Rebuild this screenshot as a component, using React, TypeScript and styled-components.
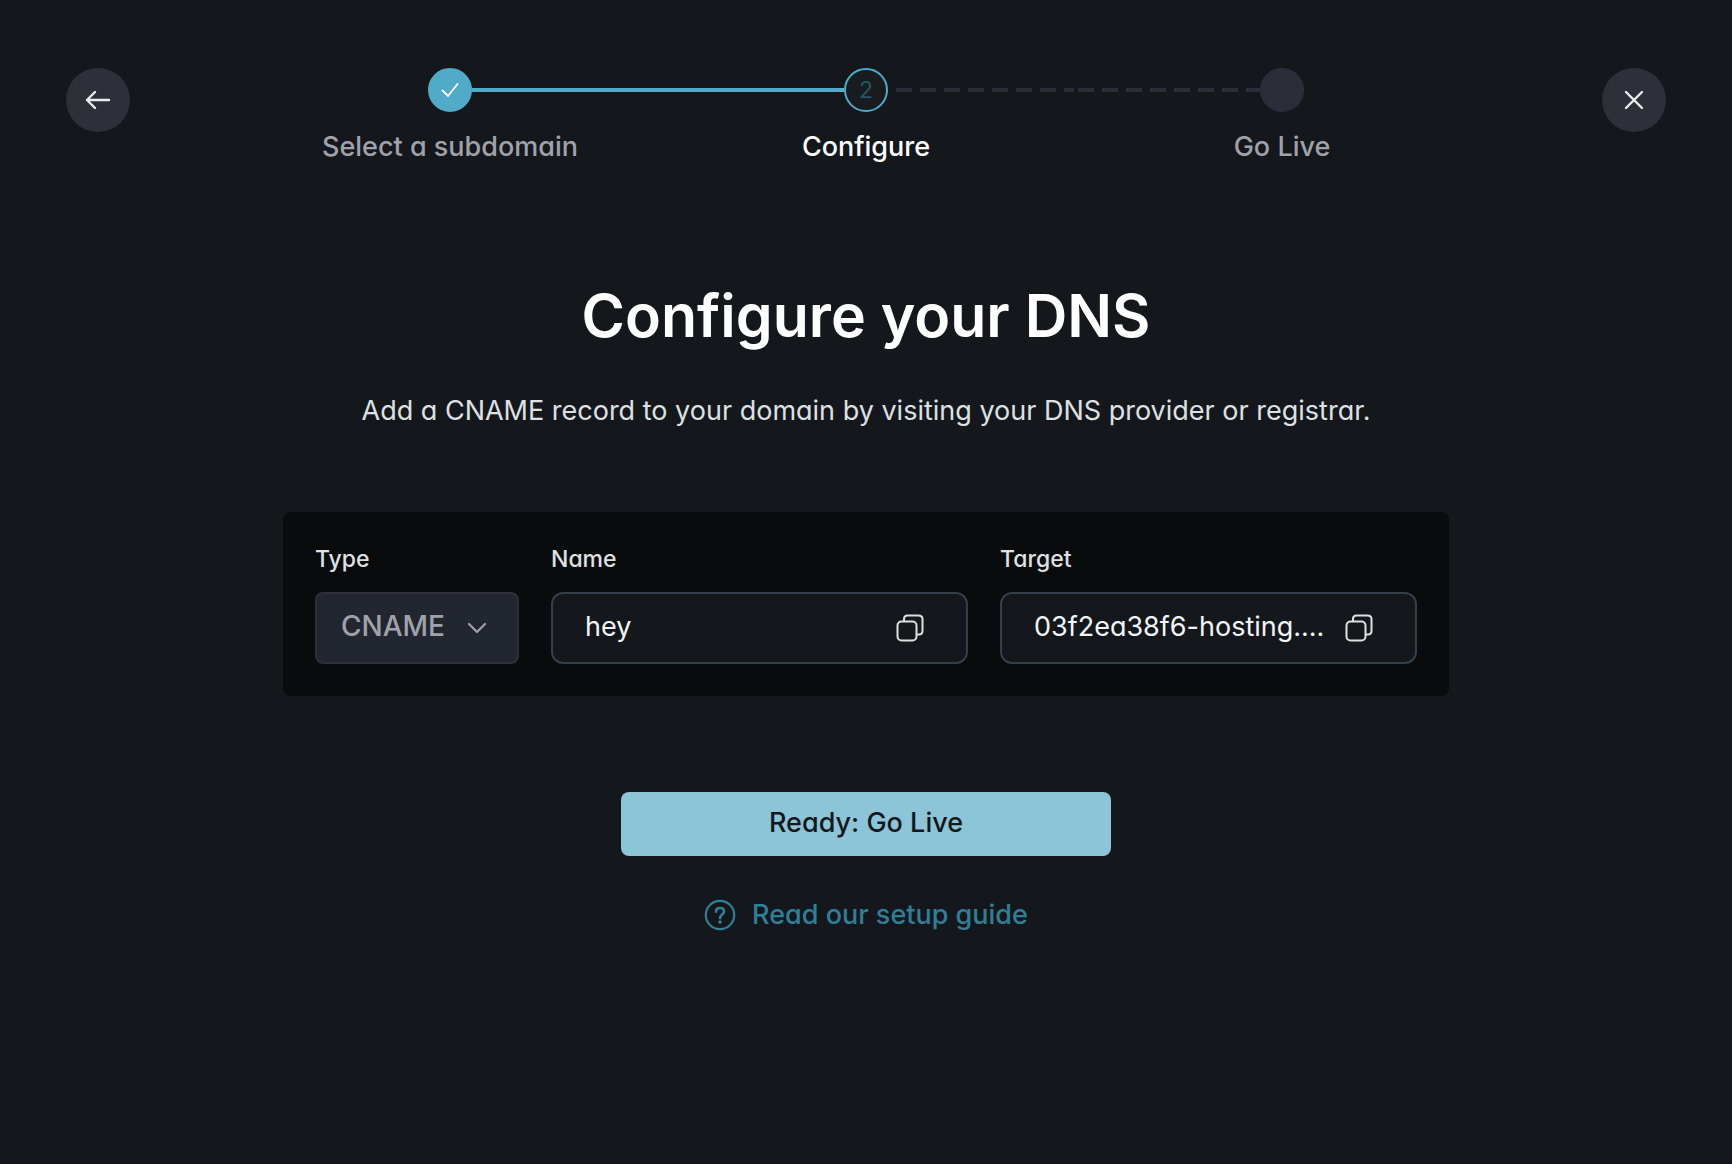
import React from "react";
import styled, { createGlobalStyle } from "styled-components";

const GlobalStyle = createGlobalStyle`
  *, *::before, *::after { box-sizing: border-box; }
  html, body, #root { height: 100%; }
  body {
    margin: 0;
    background: #14181c;
    color: #ffffff;
    font-family: Inter, "Noto Sans", sans-serif;
    font-size: 27px;
    font-feature-settings: "cv11";
    -webkit-font-smoothing: antialiased;
  }
  button, input, select {
    font: inherit;
    font-feature-settings: inherit;
    color: inherit;
    margin: 0;
  }
`;

const Page = styled.div`
  min-height: 100%;
  display: flex;
  flex-direction: column;
  border-bottom: 2px solid #12131a;
`;

const Header = styled.header`
  display: flex;
  justify-content: space-between;
  align-items: flex-start;
  padding: 68px 66px 0;
`;

const RoundButton = styled.button`
  flex: none;
  display: grid;
  place-items: center;
  width: 64px;
  height: 64px;
  padding: 0;
  border: 0;
  border-radius: 50%;
  background: #2d3039;
  color: #ebecee;
  cursor: pointer;
`;

const Steps = styled.ol`
  flex: 0 1 1248px;
  display: grid;
  grid-template-columns: repeat(3, 1fr);
  margin: 0;
  padding: 0;
  list-style: none;
`;

const Step = styled.li<{ $current?: boolean }>`
  display: flex;
  flex-direction: column;
  align-items: center;
  gap: 16px;
  font-weight: 500;
  line-height: 38px;
  color: ${(p) => (p.$current ? "#ffffff" : "#a0a2ab")};
`;

const Track = styled.div`
  align-self: stretch;
  display: flex;
  align-items: center;
`;

type LineKind = "none" | "solid" | "dashed";

const lineFill = {
  none: "none",
  solid: "linear-gradient(#50abc9, #50abc9)",
  dashed: "repeating-linear-gradient(90deg, transparent 0 8px, #2c2d39 8px 24px)",
};

const Line = styled.span<{ $kind: LineKind; $shift?: number }>`
  flex: 1;
  height: 4px;
  background-image: ${(p) => lineFill[p.$kind]};
  background-size: ${(p) => (p.$kind === "dashed" ? "24px 4px" : "auto")};
  background-position: ${(p) => p.$shift ?? 0}px 0;
`;

const Marker = styled.span<{ $state: "done" | "current" | "todo" }>`
  flex: none;
  display: grid;
  place-items: center;
  width: 44px;
  height: 44px;
  border-radius: 50%;
  border: 2px solid ${(p) => (p.$state === "todo" ? "#2c2d39" : "#50abc9")};
  background: ${(p) => ({ done: "#50abc9", current: "#181c1e", todo: "#2c2d39" })[p.$state]};
  color: ${(p) => (p.$state === "done" ? "#ffffff" : "#265464")};
  font-size: 23px;
  font-weight: 400;
  line-height: 38px;
`;

const Main = styled.main`
  display: flex;
  flex-direction: column;
  align-items: center;
  padding: 110px 48px 64px;
`;

const Title = styled.h1`
  margin: 0;
  font-size: 59px;
  font-weight: 600;
  line-height: 80px;
  text-align: center;
`;

const Intro = styled.p`
  margin: 36px 0 0;
  line-height: 38px;
  color: #dfe0e3;
  text-align: center;
`;

const Record = styled.form`
  display: grid;
  grid-template-columns: 204px 1fr 1fr;
  gap: 32px;
  width: 100%;
  max-width: 1166px;
  margin-top: 82px;
  padding: 32px;
  border-radius: 8px;
  background: #0a0b0c;
`;

const Field = styled.div`
  min-width: 0;
  display: flex;
  flex-direction: column;
  gap: 18px;
`;

const FieldLabel = styled.label`
  font-size: 23px;
  font-weight: 500;
  line-height: 30px;
  color: #dfe0e3;
`;

const SelectBox = styled.div`
  display: grid;
  align-items: center;
  height: 72px;
  color: #a0a2ab;

  & > * { grid-area: 1 / 1; }
  & > svg { justify-self: end; margin-right: 32px; pointer-events: none; }
`;

const Select = styled.select`
  appearance: none;
  width: 100%;
  height: 100%;
  padding: 0 64px 4px 24px;
  border: 2px solid #2d3039;
  border-radius: 8px;
  background: #22262e;
  font-size: 28px;
  font-weight: 500;
  opacity: 1;
`;

const CopyBox = styled.div`
  display: flex;
  align-items: center;
  height: 72px;
  padding: 0 42px 0 32px;
  border: 2px solid #353e4c;
  border-radius: 12px;
  background: #14181c;
`;

const CopyInput = styled.input`
  flex: 1;
  min-width: 0;
  height: 100%;
  padding: 0 0 4px;
  border: 0;
  outline: 0;
  background: transparent;
  color: #f1f5f8;
  text-overflow: ellipsis;
`;

const CopyButton = styled.button`
  flex: none;
  display: grid;
  place-items: center;
  padding: 0;
  border: 0;
  background: none;
  color: #dfe0e3;
  cursor: pointer;
`;

const Primary = styled.button`
  width: 100%;
  max-width: 490px;
  height: 64px;
  margin-top: 96px;
  padding: 0 0 4px;
  border: 0;
  border-radius: 8px;
  background: #8cc5d8;
  color: #14181c;
  font-weight: 500;
  cursor: pointer;
`;

const Guide = styled.a`
  display: flex;
  align-items: center;
  gap: 16px;
  margin-top: 40px;
  font-weight: 500;
  line-height: 38px;
  color: #307f98;
  text-decoration: none;
`;

const ArrowLeft = () => (
  <svg width="28" height="24" viewBox="0 0 28 24" fill="none" stroke="currentColor" strokeWidth="2.4" strokeLinecap="round" strokeLinejoin="round">
    <path d="M25 12H3M11 4L3 12L11 20" />
  </svg>
);

const Cross = () => (
  <svg width="24" height="24" viewBox="0 0 24 24" fill="none" stroke="currentColor" strokeWidth="2.4" strokeLinecap="round">
    <path d="M4 4L20 20M20 4L4 20" />
  </svg>
);

const Tick = () => (
  <svg width="20" height="20" viewBox="0 0 20 20" fill="none" stroke="currentColor" strokeWidth="1.8">
    <path d="M2 10L8 16L18 3.5" />
  </svg>
);

const Chevron = () => (
  <svg width="20" height="12" viewBox="0 0 20 12" fill="none" stroke="currentColor" strokeWidth="2.2" strokeLinecap="round" strokeLinejoin="round">
    <path d="M2 2L10 10L18 2" />
  </svg>
);

const CopyIcon = () => (
  <svg width="28" height="28" viewBox="0 0 28 28" fill="none" stroke="currentColor" strokeWidth="2">
    <rect x="1.5" y="7.5" width="19" height="19" rx="4" />
    <path d="M8 7.5V5C8 3 9.500 1.500 11.500 1.500H22.500C25 1.500 26.500 3 26.500 5V16.500C26.500 19 25 20.500 23 20.500H20.500" />
  </svg>
);

const HelpIcon = () => (
  <svg width="32" height="32" viewBox="0 0 32 32" fill="none" stroke="currentColor" strokeWidth="2.2">
    <circle cx="16" cy="16" r="14.2" />
    <path d="M12 12.800C12 10.300 13.500 9 16 9C18.500 9 20 10.500 20 12.600C20 15.500 16 15.500 16 19.300" strokeWidth="2.6" strokeLinecap="round" />
    <circle cx="16" cy="23" r="1.8" fill="currentColor" stroke="none" />
  </svg>
);

type CopyFieldProps = { id: string; label: string; value: string };

const CopyField = ({ id, label, value }: CopyFieldProps) => (
  <Field>
    <FieldLabel htmlFor={id}>{label}</FieldLabel>
    <CopyBox>
      <CopyInput id={id} readOnly value={value} />
      <CopyButton type="button" aria-label={`Copy ${label}`}>
        <CopyIcon />
      </CopyButton>
    </CopyBox>
  </Field>
);

export default function App() {
  return (
    <>
      <GlobalStyle />
      <Page>
        <Header>
          <RoundButton type="button" aria-label="Back">
            <ArrowLeft />
          </RoundButton>
          <Steps>
            <Step>
              <Track>
                <Line $kind="none" />
                <Marker $state="done"><Tick /></Marker>
                <Line $kind="solid" />
              </Track>
              Select a subdomain
            </Step>
            <Step $current aria-current="step">
              <Track>
                <Line $kind="solid" />
                <Marker $state="current">2</Marker>
                <Line $kind="dashed" />
              </Track>
              Configure
            </Step>
            <Step>
              <Track>
                <Line $kind="dashed" $shift={-4} />
                <Marker $state="todo" />
                <Line $kind="none" />
              </Track>
              Go Live
            </Step>
          </Steps>
          <RoundButton type="button" aria-label="Close">
            <Cross />
          </RoundButton>
        </Header>
        <Main>
          <Title>Configure your DNS</Title>
          <Intro>Add a CNAME record to your domain by visiting your DNS provider or registrar.</Intro>
          <Record>
            <Field>
              <FieldLabel htmlFor="type">Type</FieldLabel>
              <SelectBox>
                <Select id="type" disabled defaultValue="CNAME">
                  <option>CNAME</option>
                </Select>
                <Chevron />
              </SelectBox>
            </Field>
            <CopyField id="name" label="Name" value="hey" />
            <CopyField id="target" label="Target" value="03f2ea38f6-hosting...." />
          </Record>
          <Primary type="button">Ready: Go Live</Primary>
          <Guide href="#guide">
            <HelpIcon />
            Read our setup guide
          </Guide>
        </Main>
      </Page>
    </>
  );
}
